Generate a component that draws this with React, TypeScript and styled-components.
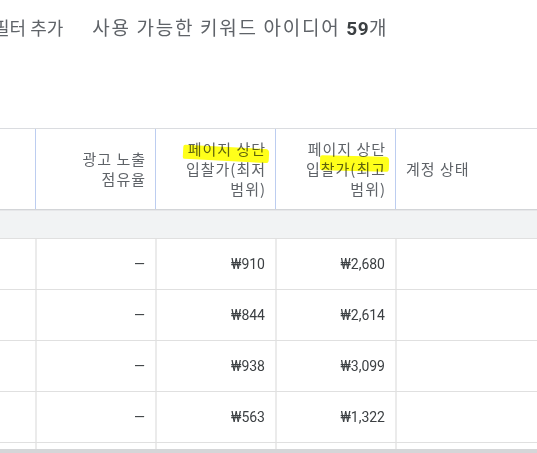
import React from 'react'
import styled, { createGlobalStyle } from 'styled-components'

type Row = {
  share: string
  low: string
  high: string
}

const rows: Row[] = [
  { share: '—', low: '₩910', high: '₩2,680' },
  { share: '—', low: '₩844', high: '₩2,614' },
  { share: '—', low: '₩938', high: '₩3,099' },
  { share: '—', low: '₩563', high: '₩1,322' },
]

const GlobalStyle = createGlobalStyle`
  html, body {
    margin: 0;
    padding: 0;
    background: #ffffff;
    overflow: hidden;
  }
  body {
    font-family: Roboto, "Noto Sans CJK KR", sans-serif;
  }
`

const App: React.FC = () => {
  return (
    <>
      <GlobalStyle />
      <Page>
        <TopBar>
          <FilterLink>필터 추가</FilterLink>
          <Summary>
            사용 가능한 키워드 아이디어 <Count>59</Count>개
          </Summary>
        </TopBar>
        <Table>
          <HeaderRow>
            <HeadCell $width={36} />
            <HeadCell $width={120}>
              광고 노출
              <br />
              점유율
            </HeadCell>
            <HeadCell $width={120}>
              <Marker $left={27} $top={18} $width={86} $height={14} $tilt={3} />
              페이지 상단
              <br />
              입찰가(최저
              <br />
              범위)
            </HeadCell>
            <HeadCell $width={120}>
              <Marker $left={44} $top={27} $width={69} $height={15} $tilt={1.5} />
              페이지 상단
              <br />
              입찰가(최고
              <br />
              범위)
            </HeadCell>
            <HeadCell $grow $left>
              계정 상태
            </HeadCell>
          </HeaderRow>
          <SummaryBand />
          <Body>
            {rows.map((row, i) => (
              <BodyRow key={i}>
                <Cell $width={37} />
                <Cell $width={120}>{row.share}</Cell>
                <Cell $width={120}>{row.low}</Cell>
                <Cell $width={120}>{row.high}</Cell>
                <Cell $grow />
              </BodyRow>
            ))}
            <BodyRow>
              <Cell $width={37} />
              <Cell $width={120} />
              <Cell $width={120} />
              <Cell $width={120} />
              <Cell $grow />
            </BodyRow>
          </Body>
          <ScrollTrack />
        </Table>
      </Page>
    </>
  )
}

const Page = styled.div`
  width: 537px;
  height: 453px;
  display: flex;
  flex-direction: column;
  overflow: hidden;
`

const TopBar = styled.div`
  height: 128px;
  box-sizing: border-box;
  padding-top: 13px;
  margin-left: -7px;
  display: flex;
  gap: 29px;
  font-family: "Noto Sans CJK KR", sans-serif;
  font-size: 19px;
  line-height: 28px;
  color: #5f6368;
  white-space: nowrap;
`

const FilterLink = styled.span`
  font-size: 18px;
`

const Summary = styled.span`
  letter-spacing: 1.7px;
`

const Count = styled.b`
  font-family: Roboto, sans-serif;
  font-weight: 700;
  letter-spacing: 0.5px;
  color: #3c4043;
`

const Table = styled.div`
  flex: 1;
  display: flex;
  flex-direction: column;
  min-height: 0;
  border-top: 1px solid #dadce0;
`

const HeaderRow = styled.div`
  display: flex;
  height: 80px;
`

const HeadCell = styled.div<{ $width?: number; $grow?: boolean; $left?: boolean }>`
  position: relative;
  box-sizing: border-box;
  width: ${(p) => (p.$width ? `${p.$width}px` : 'auto')};
  flex: ${(p) => (p.$grow ? '1' : 'none')};
  border-right: ${(p) => (p.$grow ? 'none' : '1px solid #bccdf0')};
  padding: ${(p) => (p.$left ? '0 10px 0 10px' : '0 9px 0 10px')};
  display: flex;
  align-items: center;
  justify-content: ${(p) => (p.$left ? 'flex-start' : 'flex-end')};
  text-align: ${(p) => (p.$left ? 'left' : 'right')};
  font-family: "Noto Sans CJK KR", sans-serif;
  font-size: 15px;
  letter-spacing: 1px;
  line-height: 20px;
  color: #5f6368;
  white-space: nowrap;
`

const Marker = styled.span<{
  $left: number
  $top: number
  $width: number
  $height: number
  $tilt: number
}>`
  position: absolute;
  left: ${(p) => p.$left}px;
  top: ${(p) => p.$top}px;
  width: ${(p) => p.$width}px;
  height: ${(p) => p.$height}px;
  background: #ffff1a;
  border-radius: 2px 4px 3px 2px;
  transform: rotate(${(p) => p.$tilt}deg);
  mix-blend-mode: multiply;
  pointer-events: none;
`

const SummaryBand = styled.div`
  height: 28px;
  background: #f1f3f4;
  border-top: 1px solid #d3d5d8;
  border-bottom: 1px solid #e0e0e0;
  box-shadow: inset 0 1px 0 #e6e7e9;
`

const Body = styled.div`
  flex: 1;
  min-height: 0;
  overflow: hidden;
`

const BodyRow = styled.div`
  display: flex;
  height: 51px;
  box-sizing: border-box;
  border-bottom: 1px solid #e0e0e0;
`

const Cell = styled.div<{ $width?: number; $grow?: boolean }>`
  box-sizing: border-box;
  width: ${(p) => (p.$width ? `${p.$width}px` : 'auto')};
  flex: ${(p) => (p.$grow ? '1' : 'none')};
  border-right: ${(p) => (p.$grow ? 'none' : '2px solid #ebebeb')};
  padding: 0 10px;
  display: flex;
  align-items: center;
  justify-content: flex-end;
  font-size: 14px;
  color: #3c4043;
`

const ScrollTrack = styled.div`
  height: 4px;
  flex: none;
  background: #d5d6d8;
`

export default App
